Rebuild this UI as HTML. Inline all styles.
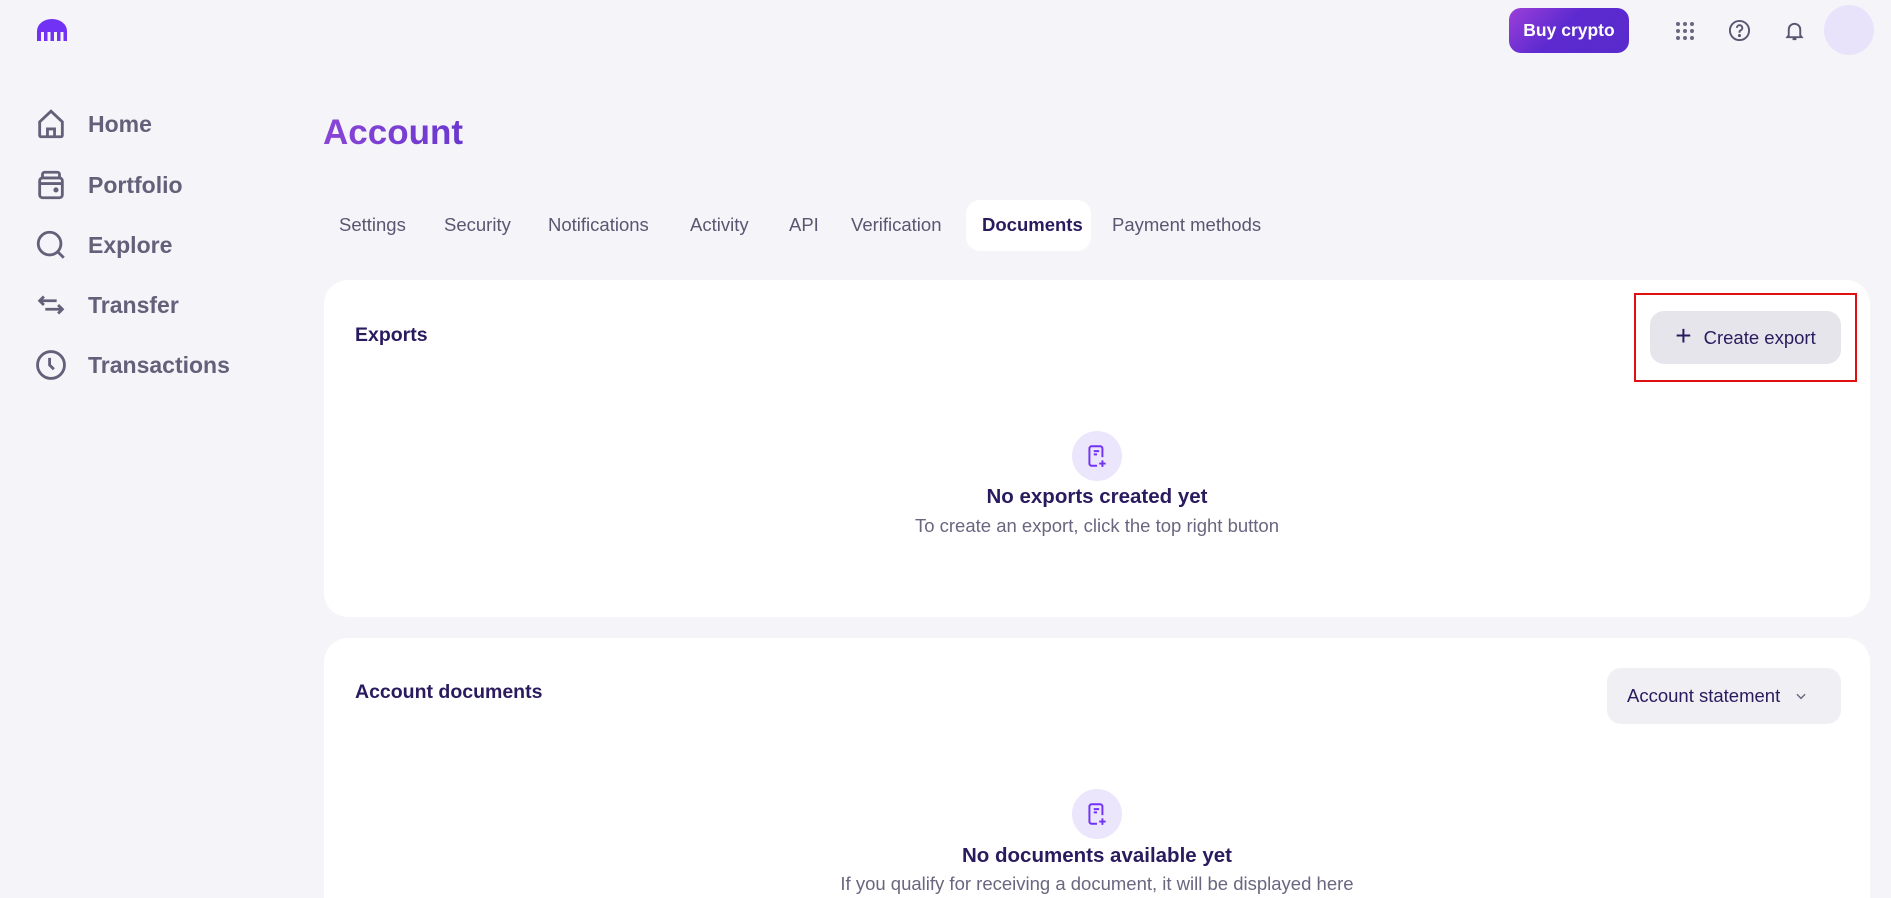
<!DOCTYPE html>
<html style="width:1891px;height:898px;overflow:hidden"><head><meta charset="utf-8"><style>
*{box-sizing:border-box;margin:0;padding:0}
body{width:1891px;height:898px;overflow:hidden;background:#f5f4f9;font-family:"Liberation Sans",sans-serif;position:relative;color:#2a1a5e}
.a{position:absolute}
.nav{position:absolute;left:36px;display:flex;align-items:center;font-size:23px;font-weight:bold;color:#64607a}
.nav svg{width:34px;height:34px;margin-right:20px;margin-left:-2px}
.tab{position:absolute;top:214px;font-size:18.5px;color:#5b5670;white-space:nowrap}
.card{position:absolute;left:324px;width:1546px;background:#fff;border-radius:24px}
.ic{position:absolute;left:1072px;width:50px;height:50px;border-radius:50%;background:#ebe6fb;display:flex;align-items:center;justify-content:center}
.t1{position:absolute;left:324px;width:1546px;text-align:center;font-size:20.5px;font-weight:bold;color:#2a1a5e}
.t2{position:absolute;left:324px;width:1546px;text-align:center;font-size:18.5px;color:#6a6680}
</style></head><body>
<svg class="a" style="left:35px;top:17px" width="34" height="26" viewBox="0 0 34 26"><path d="M2 24V14A15 12 0 0 1 32 14V24H28.5V15H25.5V24H22V15H19V24H15.5V15H12.5V24H9V15H6V24Z" fill="#7132f5"/></svg>

<div class="nav" style="top:107px"><svg viewBox="0 0 24 24" fill="none" stroke="#64607a" stroke-width="2"><path d="M4 10.5 12 3l8 7.5V20a1 1 0 0 1-1 1H5a1 1 0 0 1-1-1z"/><path d="M9.5 21v-5.5h5V21"/></svg>Home</div>
<div class="nav" style="top:168px"><svg viewBox="0 0 24 24" fill="none" stroke="#64607a" stroke-width="2"><rect x="4" y="7" width="16" height="14" rx="2"/><path d="M6 7V4.5A1.5 1.5 0 0 1 7.5 3h9A1.5 1.5 0 0 1 18 4.5V7M4 11h16"/><circle cx="15.5" cy="15.5" r=".8" fill="#64607a"/></svg>Portfolio</div>
<div class="nav" style="top:228px"><svg viewBox="0 0 24 24" fill="none" stroke="#64607a" stroke-width="2"><circle cx="11" cy="11" r="8"/><path d="m17 17 4 4"/></svg>Explore</div>
<div class="nav" style="top:288px"><svg viewBox="0 0 24 24" fill="none" stroke="#64607a" stroke-width="2"><path d="M16 9H4m3-3L4 9l3 3M8 15h12m-3-3 3 3-3 3"/></svg>Transfer</div>
<div class="nav" style="top:348px"><svg viewBox="0 0 24 24" fill="none" stroke="#64607a" stroke-width="2"><circle cx="12" cy="12" r="9.5"/><path d="M11 7v5l3 3"/></svg>Transactions</div>

<div class="a" style="left:1509px;top:8px;width:120px;height:45px;border-radius:12px;background:linear-gradient(135deg,#9b3fd8,#5c2ad0 45%,#5a2bcb);color:#fff;font-weight:bold;font-size:17.5px;display:flex;align-items:center;justify-content:center">Buy crypto</div>
<svg class="a" style="left:1673px;top:19px" width="24" height="24" viewBox="0 0 24 24" fill="#6a6680"><circle cx="5" cy="5" r="2"/><circle cx="12" cy="5" r="2"/><circle cx="19" cy="5" r="2"/><circle cx="5" cy="12" r="2"/><circle cx="12" cy="12" r="2"/><circle cx="19" cy="12" r="2"/><circle cx="5" cy="19" r="2"/><circle cx="12" cy="19" r="2"/><circle cx="19" cy="19" r="2"/></svg>
<svg class="a" style="left:1728px;top:19px" width="23" height="23" viewBox="0 0 24 24" fill="none" stroke="#5b5670" stroke-width="2"><circle cx="12" cy="12" r="10"/><path d="M9.3 9.3a2.8 2.8 0 1 1 3.8 2.6c-.8.4-1.1 1-1.1 1.8v.6"/><circle cx="12" cy="17.3" r=".6" fill="#5b5670"/></svg>
<svg class="a" style="left:1783px;top:19px" width="23" height="23" viewBox="0 0 24 24" fill="none" stroke="#5b5670" stroke-width="2"><path d="M6 17V11a6 6 0 0 1 12 0v6l1.5 2h-15zM10 21h4"/></svg>
<div class="a" style="left:1824px;top:5px;width:50px;height:50px;border-radius:50%;background:#e8e3fa"></div>

<div class="a" style="left:323px;top:113px;font-size:35px;font-weight:bold;background:linear-gradient(90deg,#8a45d6,#6a38cf);-webkit-background-clip:text;color:transparent">Account</div>

<div class="a" style="left:966px;top:200px;width:125px;height:51px;background:#fff;border-radius:14px"></div>
<div class="tab" style="left:339px">Settings</div>
<div class="tab" style="left:444px">Security</div>
<div class="tab" style="left:548px">Notifications</div>
<div class="tab" style="left:690px">Activity</div>
<div class="tab" style="left:789px">API</div>
<div class="tab" style="left:851px">Verification</div>
<div class="tab" style="left:982px;color:#2a1a5e;font-weight:bold">Documents</div>
<div class="tab" style="left:1112px">Payment methods</div>

<div class="card" style="top:280px;height:337px"></div>
<div class="a" style="left:355px;top:324px;font-size:19.5px;font-weight:bold">Exports</div>
<div class="a" style="left:1650px;top:311px;width:191px;height:53px;border-radius:14px;background:#e6e5eb;display:flex;align-items:center;justify-content:center;font-size:18.5px;color:#2a1a5e"><span style="font-size:28px;font-weight:300;margin-right:12px;margin-top:-4px">+</span>Create export</div>
<div class="a" style="left:1634px;top:293px;width:223px;height:89px;border:2px solid #e01010"></div>
<div class="ic" style="top:431px"><svg width="26" height="26" viewBox="0 0 24 24" fill="none" stroke="#7132f5" stroke-width="1.8"><path d="M12 21H7a2 2 0 0 1-2-2V5a2 2 0 0 1 2-2h8a2 2 0 0 1 2 2v8M9 7.5h5M9 10.5h3M17 16v6M14 19h6"/></svg></div>
<div class="t1" style="top:485px">No exports created yet</div>
<div class="t2" style="top:515px">To create an export, click the top right button</div>

<div class="card" style="top:638px;height:260px;border-radius:24px 24px 0 0"></div>
<div class="a" style="left:355px;top:681px;font-size:19.5px;font-weight:bold">Account documents</div>
<div class="a" style="left:1607px;top:668px;width:234px;height:56px;border-radius:14px;background:#f0eff4;display:flex;align-items:center;padding-left:20px;font-size:18.5px;color:#2a1a5e">Account statement<svg style="margin-left:14px" width="14" height="14" viewBox="0 0 24 24" fill="none" stroke="#6a6680" stroke-width="2.5"><path d="m5 9 7 7 7-7"/></svg></div>
<div class="ic" style="top:789px"><svg width="26" height="26" viewBox="0 0 24 24" fill="none" stroke="#7132f5" stroke-width="1.8"><path d="M12 21H7a2 2 0 0 1-2-2V5a2 2 0 0 1 2-2h8a2 2 0 0 1 2 2v8M9 7.5h5M9 10.5h3M17 16v6M14 19h6"/></svg></div>
<div class="t1" style="top:844px">No documents available yet</div>
<div class="t2" style="top:873px">If you qualify for receiving a document, it will be displayed here</div>
</body></html>
